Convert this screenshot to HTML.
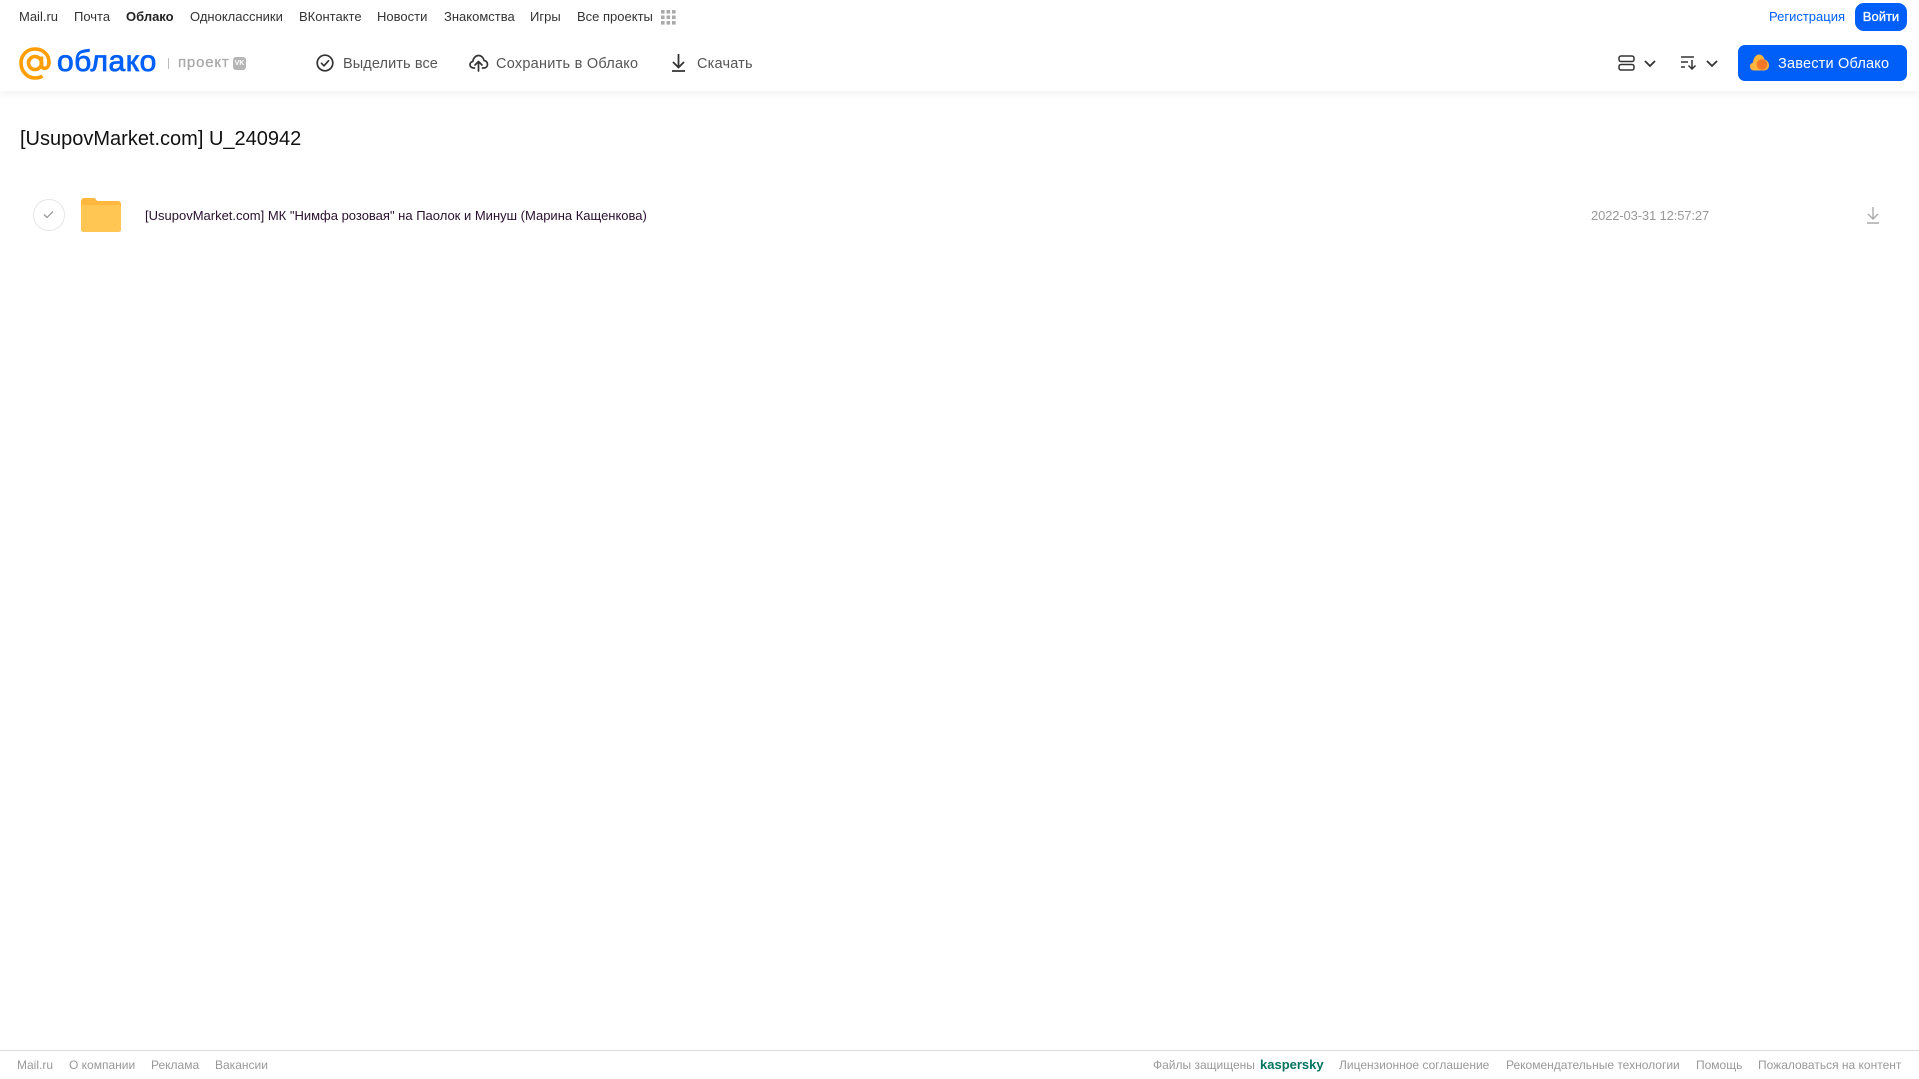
<!DOCTYPE html>
<html lang="ru"><head><meta charset="utf-8"><title>Облако</title>
<style>
html,body{margin:0;padding:0;background:#fff;width:1919px;height:1079px;overflow:hidden;font-family:"Liberation Sans",sans-serif}
.t{position:absolute;white-space:nowrap;line-height:16px}
svg{position:absolute;overflow:visible}
.n{font-size:13px;color:#333;top:9px}
.a{font-size:14.5px;color:#555;top:56px;letter-spacing:.2px}
.f{font-size:12px;color:#999;top:1057px}
</style></head><body>
<div style="position:absolute;left:0;top:0;width:1919px;height:91px;background:#fff;box-shadow:0 2px 8px rgba(0,0,0,.07)"></div>

<span class="t n" style="left:19px">Mail.ru</span>
<span class="t n" style="left:74px">Почта</span>
<span class="t n" style="left:126px;font-weight:bold;color:#222">Облако</span>
<span class="t n" style="left:190px">Одноклассники</span>
<span class="t n" style="left:299px">ВКонтакте</span>
<span class="t n" style="left:377px">Новости</span>
<span class="t n" style="left:444px">Знакомства</span>
<span class="t n" style="left:530px">Игры</span>
<span class="t n" style="left:577px">Все проекты</span>
<svg style="left:661px;top:10px" width="15" height="15" fill="#aaa"><rect width="3.6" height="3.6" x="0" y="0"/><rect width="3.6" height="3.6" x="5.5" y="0"/><rect width="3.6" height="3.6" x="11" y="0"/><rect width="3.6" height="3.6" x="0" y="5.5"/><rect width="3.6" height="3.6" x="5.5" y="5.5"/><rect width="3.6" height="3.6" x="11" y="5.5"/><rect width="3.6" height="3.6" x="0" y="11"/><rect width="3.6" height="3.6" x="5.5" y="11"/><rect width="3.6" height="3.6" x="11" y="11"/></svg>

<span class="t" style="left:1769px;top:9px;font-size:13px;color:#005ff9">Регистрация</span>
<div style="position:absolute;left:1855px;top:3px;width:52px;height:28px;border-radius:9px;background:#005ff9;color:#fff;font-size:13px;-webkit-text-stroke:.3px #fff;text-align:center;line-height:28px">Войти</div>

<svg style="left:19px;top:47px" width="32" height="33" viewBox="0 0 32 33" fill="none" stroke="#ff9e00" stroke-width="3.6"><circle cx="16" cy="16" r="6.500"/><path d="M22.500 9.500V18c0 5 7.500 4.500 7.500-2.500C30 7.500 24 2 16 2 8 2 2 8 2 16s6 15 14 15c3 0 5.500-.7 7.500-2"/></svg>
<span class="t" style="left:57px;top:44px;font-size:30px;line-height:36px;color:#005ff9;letter-spacing:.5px;-webkit-text-stroke:.8px #005ff9">облако</span>
<div style="position:absolute;left:168px;top:58px;width:1px;height:11px;background:#bbb"></div>
<span class="t" style="left:178px;top:55px;font-size:15px;color:#aaa;letter-spacing:.8px;-webkit-text-stroke:.3px #aaa">проект</span>
<div style="position:absolute;left:233px;top:57px;width:13px;height:13px;border-radius:3px;background:#b5b5b5;color:#fff;font-size:7px;font-weight:bold;line-height:13px;text-align:center">VK</div>

<svg style="left:316px;top:54px" width="18" height="18" viewBox="0 0 18 18" fill="none" stroke="#333" stroke-width="1.700"><circle cx="9" cy="9" r="7.800"/><path d="M5.500 9.300l2.500 2.500 4.500-5" stroke-linecap="round" stroke-linejoin="round"/></svg>
<span class="t a" style="left:343px;letter-spacing:.1px">Выделить все</span>
<svg style="left:469px;top:54px" width="19" height="18" viewBox="0 0 19 18" fill="none" stroke="#333" stroke-width="1.700" stroke-linecap="round" stroke-linejoin="round"><path d="M5.500 14H4.500C2.500 14 1 12.500 1 10.700c0-1.700 1.300-3 2.800-3.200C4.300 4 6.700 1.500 9.500 1.500c2.800 0 5 2.200 5.600 5 2 .2 3.400 2 3.400 3.800 0 2-1.500 3.700-3.500 3.700h-1.500"/><path d="M9.500 17V8M6 11l3.500-3.500L13 11"/></svg>
<span class="t a" style="left:496px;letter-spacing:.25px">Сохранить в Облако</span>
<svg style="left:671px;top:54px" width="15" height="18" viewBox="0 0 15 18" fill="none" stroke="#333" stroke-width="1.800"><path d="M7.500 0v13M2 8l5.500 5.500L13 8M1 17h13"/></svg>
<span class="t a" style="left:697px">Скачать</span>

<svg style="left:1618px;top:55px" width="17" height="16" viewBox="0 0 17 16" fill="none" stroke="#333" stroke-width="1.500"><rect x="1" y="1" width="15" height="5.500" rx="2"/><rect x="1" y="9.500" width="15" height="5.500" rx="2"/></svg>
<svg style="left:1644px;top:60px" width="12" height="7" fill="none" stroke="#333" stroke-width="1.800"><path d="M1 1l5 5 5-5"/></svg>
<svg style="left:1681px;top:56px" width="17" height="14" viewBox="0 0 17 14" fill="none" stroke="#333" stroke-width="1.500"><path d="M0 1h13M0 6h7M0 11h4M11 4v9M7.500 9.500l3.500 3.500 3.500-3.500"/></svg>
<svg style="left:1706px;top:60px" width="12" height="7" fill="none" stroke="#333" stroke-width="1.800"><path d="M1 1l5 5 5-5"/></svg>

<div style="position:absolute;left:1738px;top:45px;width:169px;height:36px;border-radius:7px;background:#005ff9"></div>
<svg style="left:1750px;top:54px" width="19" height="17" viewBox="0 0 19 17"><path fill="#ffb43c" d="M4 16.500C1.500 16.500 0 14.500 0 12.500 0 10.500 1.300 9 3 8.700 3.300 4 6 .5 9 .5c3 0 5 2.500 5.500 5C17 6 19 8.500 19 11.500c0 2.800-2.200 5-5 5z"/><circle cx="12" cy="10.500" r="5.300" fill="#f5772a"/></svg>
<span class="t" style="left:1778px;top:56px;font-size:14.5px;color:#fff;letter-spacing:.2px">Завести Облако</span>

<span class="t" style="left:20px;top:127px;font-size:20px;line-height:24px;color:#111">[UsupovMarket.com] U_240942</span>

<div style="position:absolute;left:33px;top:199px;width:30px;height:30px;border:1px solid #e6e6e6;border-radius:50%"></div>
<svg style="left:43px;top:210px" width="11" height="9" fill="none" stroke="#999" stroke-width="1.300"><path d="M1 4.500l3 3 6-6"/></svg>
<svg style="left:81px;top:198px" width="40" height="34" viewBox="0 0 40 34"><path fill="#ffb83f" d="M0 3a3 3 0 0 1 3-3h9c2 0 3 1 4 3h21a3 3 0 0 1 3 3v4H0z"/><rect y="7" width="40" height="27" rx="2.500" fill="#ffc653"/></svg>
<span class="t" style="left:145px;top:208px;font-size:13px;color:#2a1030">[UsupovMarket.com] МК "Нимфа розовая" на Паолок и Минуш (Марина Кащенкова)</span>
<span class="t" style="left:1591px;top:208px;font-size:13px;letter-spacing:-.14px;color:#999">2022-03-31 12:57:27</span>
<svg style="left:1866px;top:207px" width="14" height="17" viewBox="0 0 14 17" fill="none" stroke="#aaa" stroke-width="1.400"><path d="M7 0v12M2 7l5 5 5-5M1 16h12"/></svg>

<div style="position:absolute;left:0;top:1050px;width:1919px;height:1px;background:#ddd"></div>
<span class="t f" style="left:17px">Mail.ru</span>
<span class="t f" style="left:69px">О компании</span>
<span class="t f" style="left:151px">Реклама</span>
<span class="t f" style="left:215px">Вакансии</span>
<span class="t f" style="left:1153px">Файлы защищены</span>
<span class="t f" style="left:1260px;font-size:13px;font-weight:bold;color:#00745f">kaspersky</span>
<span class="t f" style="left:1339px">Лицензионное соглашение</span>
<span class="t f" style="left:1506px">Рекомендательные технологии</span>
<span class="t f" style="left:1696px">Помощь</span>
<span class="t f" style="left:1758px">Пожаловаться на контент</span>
</body></html>
